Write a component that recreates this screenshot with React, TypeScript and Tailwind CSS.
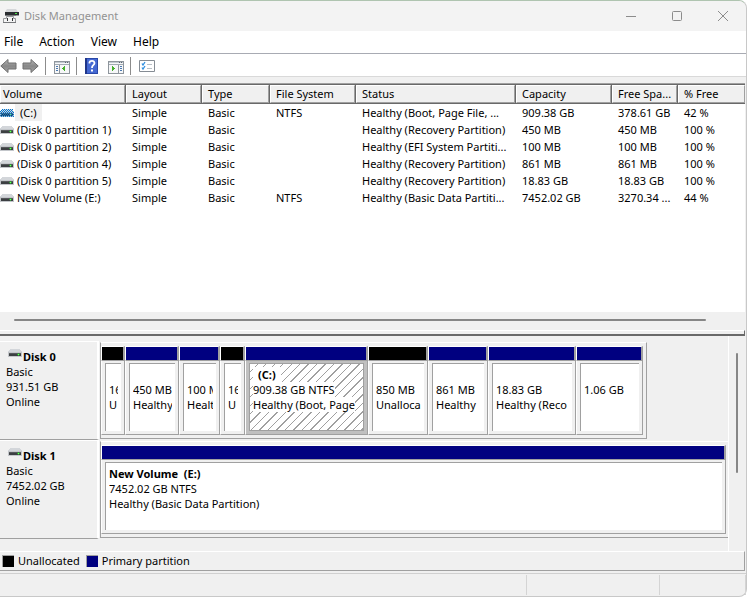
import type { ReactNode } from "react";

type Volume = {
  name: string;
  fs?: string;
  status: string;
  capacity: string;
  free: string;
  percent: string;
  selected?: boolean;
};

const volumes: Volume[] = [
  { name: "(C:)", fs: "NTFS", status: "Healthy (Boot, Page File, ...", capacity: "909.38 GB", free: "378.61 GB", percent: "42 %", selected: true },
  { name: "(Disk 0 partition 1)", status: "Healthy (Recovery Partition)", capacity: "450 MB", free: "450 MB", percent: "100 %" },
  { name: "(Disk 0 partition 2)", status: "Healthy (EFI System Partiti...", capacity: "100 MB", free: "100 MB", percent: "100 %" },
  { name: "(Disk 0 partition 4)", status: "Healthy (Recovery Partition)", capacity: "861 MB", free: "861 MB", percent: "100 %" },
  { name: "(Disk 0 partition 5)", status: "Healthy (Recovery Partition)", capacity: "18.83 GB", free: "18.83 GB", percent: "100 %" },
  { name: "New Volume (E:)", fs: "NTFS", status: "Healthy (Basic Data Partiti...", capacity: "7452.02 GB", free: "3270.34 ...", percent: "44 %" },
];

const columns = [
  { label: "Volume", width: "w-[126px]" },
  { label: "Layout", width: "w-[76px]" },
  { label: "Type", width: "w-[68px]" },
  { label: "File System", width: "w-[86px]" },
  { label: "Status", width: "w-[160px]" },
  { label: "Capacity", width: "w-[96px]" },
  { label: "Free Spa...", width: "w-[66px]" },
  { label: "% Free", width: "" },
];

type Part = { width: string; title?: string; size: string; status?: string; free?: boolean; selected?: boolean };

const disk0: Part[] = [
  { width: "w-[24px]", size: "16", status: "U", free: true },
  { width: "w-[54px]", size: "450 MB", status: "Healthy" },
  { width: "w-[41px]", size: "100 M", status: "Healt" },
  { width: "w-[25px]", size: "16", status: "U", free: true },
  { width: "w-[123px]", title: "(C:)", size: "909.38 GB NTFS", status: "Healthy (Boot, Page", selected: true },
  { width: "w-[60px]", size: "850 MB", status: "Unalloca", free: true },
  { width: "w-[60px]", size: "861 MB", status: "Healthy" },
  { width: "w-[88px]", size: "18.83 GB", status: "Healthy (Reco" },
  { width: "w-[67px]", size: "1.06 GB" },
];

const disk1: Part[] = [
  { width: "w-full", title: "New Volume  (E:)", size: "7452.02 GB NTFS", status: "Healthy (Basic Data Partition)" },
];

function DriveIcon({ selected = false }: { selected?: boolean }) {
  return (
    <svg width="14" height="8" viewBox="0 0 14 8" className="shrink-0" shapeRendering="crispEdges">
      <path d="M2 0h10l2 3H0z" fill="#d3d6da" />
      <path d="M0 3h14v5H0z" fill="#c3c6ca" />
      <path d="M1 4h12v3H1z" fill="#3c3f42" />
      <path d="M1 4h12v1H1z" fill="#55585b" />
      <path d="M9 5h3v1H9zM10 4h1v3h-1z" fill="#2f9c35" />
      <path d="M10 5h1v1h-1z" fill="#6dff62" />
      {selected && (
        <>
          <defs>
            <pattern id="dither" width="2" height="2" patternUnits="userSpaceOnUse">
              <path d="M0 0h1v1H0zM1 1h1v1H1z" fill="#0078d7" />
            </pattern>
          </defs>
          <path d="M1 0h12l1 3v5H0V3z" fill="url(#dither)" />
        </>
      )}
    </svg>
  );
}

function AppIcon() {
  return (
    <svg width="16" height="16" viewBox="0 0 16 16">
      <path d="M4 1h9l2 3H2z" fill="#d5d7d9" />
      <path d="M2 4h14v3H2z" fill="#2b2e31" />
      <path d="M12 5h2v1h-2z" fill="#4ee04a" />
      <path d="M13 7h3v1h-3z" fill="#9a9c9f" />
      <path d="M2 7h11v1H2z" fill="#77797c" />
      <path d="M3.500 8.500h7v2h2v4h-12v-4h3z" fill="#f4f4f4" stroke="#96989b" />
      <path d="M4 10h1v3H4zM9 10h1v3H9z" fill="#303235" />
      <path d="M0 14h13v1H0z" fill="#77797c" />
    </svg>
  );
}

function ArrowIcon({ right = false }: { right?: boolean }) {
  return (
    <svg width="17" height="16" viewBox="0 0 17 16" className={right ? "-scale-x-100" : ""}>
      <defs>
        <linearGradient id="arrow" x1="0" y1="0" x2="0" y2="1">
          <stop offset="0" stopColor="#b8b8b8" />
          <stop offset="0.5" stopColor="#888888" />
          <stop offset="1" stopColor="#a6a6a6" />
        </linearGradient>
      </defs>
      <path d="M0.800 8L8 1.500V5h8v6H8v3.500z" fill="url(#arrow)" stroke="#6e6e6e" />
    </svg>
  );
}

function PaneIcon({ flip = false }: { flip?: boolean }) {
  return (
    <svg width="16" height="13" viewBox="0 0 16 13" className="mt-[2px]" shapeRendering="crispEdges">
      <path d="M0 0h16v13H0z" fill="#8e959c" />
      <path d="M1 1h14v11H1z" fill="#f6f7f8" />
      <path d="M1 1h14v1H1z" fill="#c3cad1" />
      <path d="M1 3h14v1H1z" fill="#a3abb3" />
      <path d="M11 1h1v1h-1zM13 1h1v1h-1z" fill="#5b6570" />
      {flip ? (
        <>
          <path d="M10 4h1v8h-1z" fill="#8e959c" />
          <path d="M12 5h2v1h-2zM12 7h2v1h-2zM12 9h2v1h-2z" fill="#4b78b0" />
          <path d="M4 5h1v1h1v1h1v1H6v1H5v1H4z" fill="#46b02d" />
        </>
      ) : (
        <>
          <path d="M5 4h1v8H5z" fill="#8e959c" />
          <path d="M2 5h2v1H2zM2 7h2v1H2zM2 9h2v1H2z" fill="#4b78b0" />
          <path d="M11 5h-1v1H9v1H8v1h1v1h1v1h1z" fill="#46b02d" />
        </>
      )}
    </svg>
  );
}

function HelpIcon() {
  return (
    <svg width="13" height="16" viewBox="0 0 13 16">
      <path d="M0 0h13v16H0z" fill="#2947a8" />
      <path d="M2 1h10v14H2z" fill="#4468d2" />
      <path d="M0 0h2v16H0z" fill="#20368a" />
      <path d="M4.500 5.500V4.300Q4.800 2.800 7 2.800T9.500 5Q9.500 6.300 8.200 7.200T7 10" fill="none" stroke="#fff" strokeWidth="1.800" />
      <path d="M6 11.500h2v2H6z" fill="#fff" />
    </svg>
  );
}

function ChecklistIcon() {
  return (
    <svg width="16" height="12" viewBox="0 0 16 12">
      <path d="M0.500 0.500h15v11h-15z" fill="#fff" stroke="#858c94" />
      <path d="M3 3.500l1 1.500 2-3M3 7.500l1 1.500 2-3" fill="none" stroke="#2f8fe0" strokeWidth="1.300" />
      <path d="M8 4h5v1H8zM8 8h5v1H8z" fill="#b8bfc6" />
    </svg>
  );
}

function ToolButton({ label, children }: { label: string; children: ReactNode }) {
  return (
    <button type="button" aria-label={label} className="flex h-5 items-center justify-center">
      {children}
    </button>
  );
}

function Separator() {
  return <span className="mr-2 ml-[6px] h-[18px] w-px bg-[#8c8c8c]" />;
}

function PartitionCell({ part }: { part: Part }) {
  return (
    <div className={`flex shrink-0 flex-col ${part.width}`}>
      <div className={`h-[14px] border-t border-r-2 border-l border-t-white border-r-[#a0a0a0] border-l-white ${part.free ? "bg-black" : "bg-[#000080]"}`} />
      <div className={`flex-1 border-y border-r border-l border-[#a0a0a0] border-l-white p-[3px] pt-[2px] ${part.selected ? "bg-[#c0c0c0]" : "bg-[#f0f0f0]"}`}>
        <div
          className={`h-full overflow-hidden border-t border-l border-[#a0a0a0] px-[3px] pt-[3px] ${
            part.selected
              ? "border-r border-b bg-[repeating-linear-gradient(135deg,#fff_0px,#fff_5px,#a0a0a0_5px,#a0a0a0_6px)]"
              : "bg-white"
          }`}
        >
          <div className="overflow-hidden leading-[15px] whitespace-pre *:h-[15px]">
            <div className="font-bold">
              <span className={part.selected ? "inline-block bg-white px-[5px]" : ""}>{part.title}</span>
            </div>
            <div>
              <span className="inline-block bg-white">{part.size}</span>
            </div>
            <div>
              <span className="inline-block bg-white">{part.status}</span>
            </div>
          </div>
        </div>
      </div>
    </div>
  );
}

function DiskRow({ name, size, parts, fill = false }: { name: string; size: string; parts: Part[]; fill?: boolean }) {
  return (
    <div className="flex h-[99px]">
      <div className="w-[99px] shrink-0 border-t border-r-2 border-b border-t-white border-r-white border-b-[#a0a0a0] pt-[7px] pl-[6px] leading-[15px]">
        <div className="flex gap-px pl-[2px] font-bold">
          <DriveIcon />
          {name}
        </div>
        <div>Basic</div>
        <div>{size}</div>
        <div>Online</div>
      </div>
      <div className={`my-px ml-px flex border-y border-l border-[#a0a0a0] border-t-white py-[3px] ${fill ? "flex-1 pr-[2px]" : "border-r pr-[3px]"}`}>
        {parts.map((part, i) => (
          <PartitionCell key={i} part={part} />
        ))}
      </div>
    </div>
  );
}

function LegendItem({ label, color }: { label: string; color: string }) {
  return (
    <div className="flex items-center gap-1">
      <span className={`size-3 border-t border-l border-[#a0a0a0] ${color}`} />
      {label}
    </div>
  );
}

export default function App() {
  return (
    <div className="h-screen bg-white pb-[3px] font-['Noto_Sans','Open_Sans',sans-serif] text-[11px] text-black">
      <div className="flex h-full flex-col rounded-tr-lg rounded-br-lg border-t border-r border-b border-[#c8c8c8] border-t-[#afc4b0] bg-[#f0f0f0]">
        <header className="flex h-[30px] shrink-0 items-center rounded-tr-lg bg-[#f3f3f3] pl-[3px] text-[#929292]">
          <AppIcon />
          <h1 className="ml-[5px] flex-1">Disk Management</h1>
          <div className="flex h-full text-[#8c8c8c]">
            <button type="button" aria-label="Minimize" className="flex w-[46px] items-center justify-center">
              <svg width="10" height="10"><path d="M0 5.500h10" stroke="currentColor" /></svg>
            </button>
            <button type="button" aria-label="Maximize" className="flex w-[46px] items-center justify-center">
              <svg width="10" height="10"><rect x="0.500" y="0.500" width="9" height="9" rx="1" fill="none" stroke="currentColor" /></svg>
            </button>
            <button type="button" aria-label="Close" className="flex w-[46px] items-center justify-center">
              <svg width="10" height="10"><path d="M0 0l10 10M10 0L0 10" stroke="currentColor" /></svg>
            </button>
          </div>
        </header>

        <nav className="flex h-[23px] shrink-0 items-center gap-4 border-b border-[#a8abb3] bg-white pl-1 text-[12px]">
          {["File", "Action", "View", "Help"].map((item) => (
            <button key={item} type="button">{item}</button>
          ))}
        </nav>

        <div className="flex h-[23px] shrink-0 items-center border-b border-[#d9d9d9] bg-white pt-[2px]">
          <div className="flex gap-[5px]">
            <ToolButton label="Back"><ArrowIcon /></ToolButton>
            <ToolButton label="Forward"><ArrowIcon right /></ToolButton>
          </div>
          <Separator />
          <ToolButton label="Show/Hide Console Tree"><PaneIcon /></ToolButton>
          <Separator />
          <div className="flex gap-[10px]">
            <ToolButton label="Help"><HelpIcon /></ToolButton>
            <ToolButton label="Show/Hide Action Pane"><PaneIcon flip /></ToolButton>
          </div>
          <Separator />
          <ToolButton label="Settings"><ChecklistIcon /></ToolButton>
        </div>

        {/* Volume list */}
        <section className="mt-[6px] mr-px flex min-h-0 flex-1 flex-col border-t border-[#a0a0a0] bg-white">
          <div className="min-h-0 flex-1 overflow-hidden border-t border-[#696969]">
            <table className="w-full table-fixed border-separate border-spacing-0">
              <thead>
                <tr>
                  {columns.map((col, i) => (
                    <th
                      key={col.label}
                      className={`h-[19px] border-b border-[#696969] bg-[#f0f0f0] p-0 text-left font-normal ${col.width} ${i < columns.length - 1 ? "border-r" : ""}`}
                    >
                      <div className={`border border-[#a0a0a0] border-t-white border-l-white leading-4 whitespace-nowrap ${i === 0 ? "pl-[2px]" : "pl-[5px]"}`}>
                        {col.label}
                      </div>
                    </th>
                  ))}
                </tr>
              </thead>
              <tbody>
                {volumes.map((v) => (
                  <tr key={v.name} className="h-[17px] leading-[17px] *:p-0 *:pl-[6px] *:whitespace-nowrap">
                    <td className="pl-0!">
                      <div className="flex items-center gap-px">
                        <DriveIcon selected={v.selected} />
                        <span className={v.selected ? "bg-[#f0f0f0] px-[5px]" : "pl-[2px]"}>{v.name}</span>
                      </div>
                    </td>
                    <td>Simple</td>
                    <td>Basic</td>
                    <td>{v.fs}</td>
                    <td>{v.status}</td>
                    <td>{v.capacity}</td>
                    <td>{v.free}</td>
                    <td>{v.percent}</td>
                  </tr>
                ))}
              </tbody>
            </table>
          </div>
          <div className="h-[18px] shrink-0 bg-[#f0f0f0] pt-[7px] pr-[39px] pl-[14px]">
            <div className="h-[2px] rounded-full bg-[#868686]" />
          </div>
        </section>
        <div className="mr-px h-[6px] shrink-0 border-t border-r border-b-2 border-t-white border-r-[#696969] border-b-[#696969]" />

        {/* Graphical view */}
        <section className="flex shrink-0">
          <div className="min-w-0 flex-1 pt-[5px] pb-3">
            <DiskRow name="Disk 0" size="931.51 GB" parts={disk0} />
            <DiskRow name="Disk 1" size="7452.02 GB" parts={disk1} fill />
          </div>
          <div className="w-[18px] border-l border-white pt-[17px] pl-[7px]">
            <div className="h-[120px] w-[2px] rounded-full bg-[#868686]" />
          </div>
        </section>

        <div className="mr-px flex h-5 shrink-0 items-center gap-[6px] border-t border-r border-b border-[#a0a0a0] border-t-white pl-[2px]">
          <LegendItem label="Unallocated" color="bg-black" />
          <LegendItem label="Primary partition" color="bg-[#000080]" />
        </div>

        <footer className="mt-[2px] flex h-[23px] shrink-0 border-t border-[#d0d0d0] pt-px pb-px">
          <div className="flex-1 border-r border-[#d4d4d4]" />
          <div className="w-[133px] border-r border-[#d4d4d4]" />
          <div className="w-[86px] border-r border-[#d4d4d4]" />
        </footer>
      </div>
    </div>
  );
}
